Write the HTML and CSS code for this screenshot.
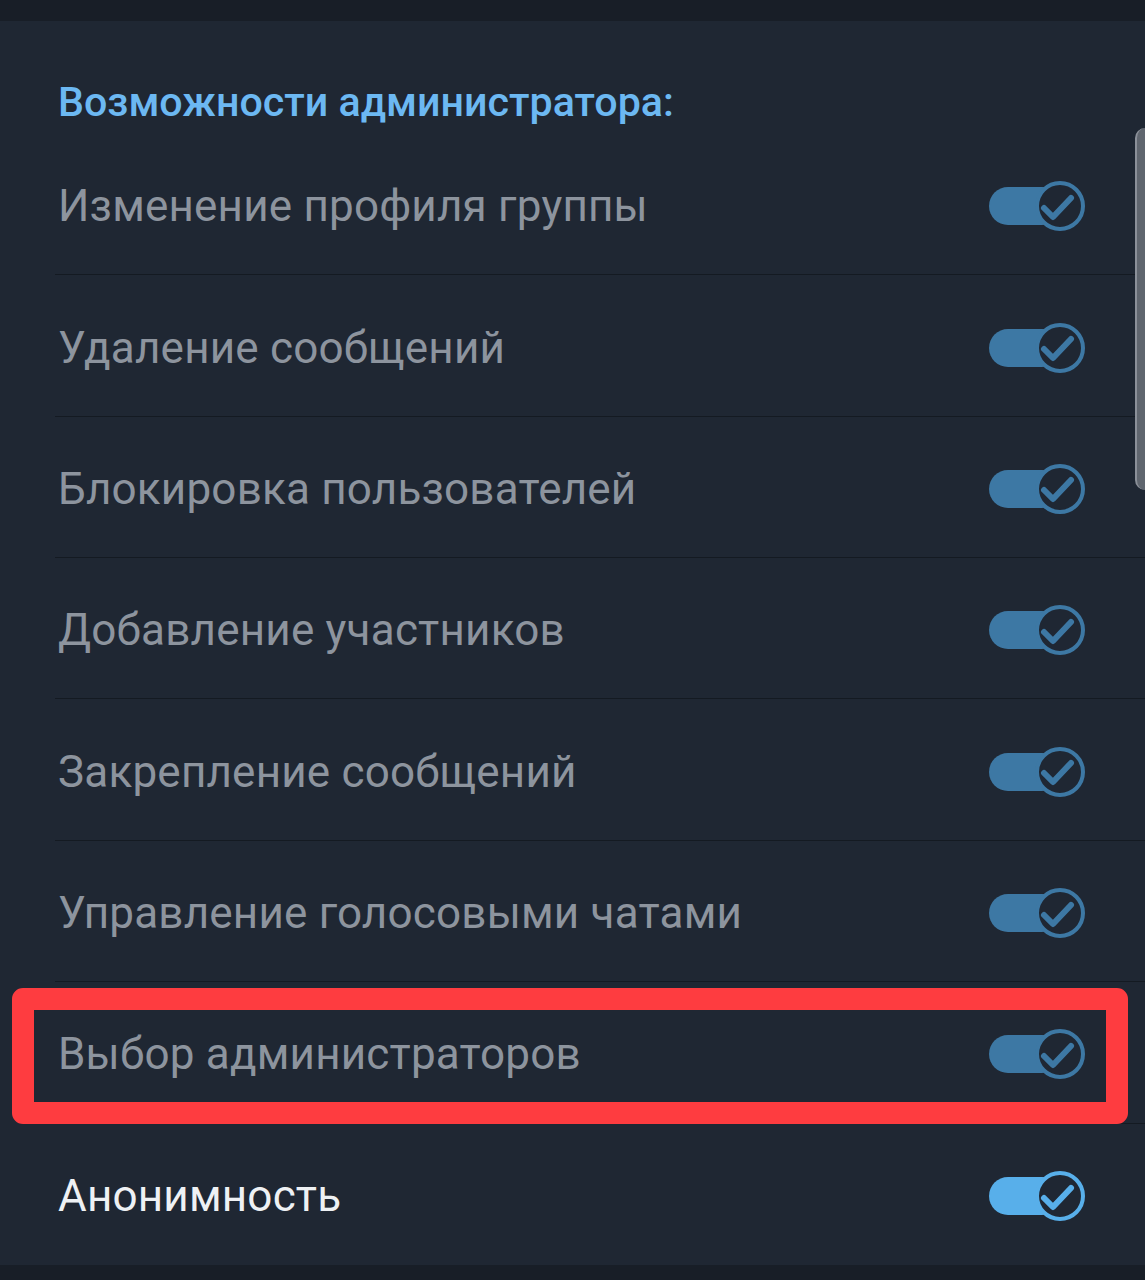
FILE: index.html
```html
<!DOCTYPE html>
<html lang="ru">
<head>
  <meta charset="UTF-8" />
  <meta name="viewport" content="width=device-width, initial-scale=1" />
  <title>Права администратора</title>
  <link rel="stylesheet" href="styles.css">
</head>
<body>
  <div class="topbar"></div>
  <main class="panel">
    <h2 class="section-title">Возможности администратора:</h2>
    <ul class="rights">
      <li class="right-row">
        <span class="right-label">Изменение профиля группы</span>
        <span class="toggle dim"><span class="knob"><svg viewBox="0 0 50 50"><path d="M9 27 L18 36 L36 17" /></svg></span></span>
      </li>
      <li class="right-row">
        <span class="right-label">Удаление сообщений</span>
        <span class="toggle dim"><span class="knob"><svg viewBox="0 0 50 50"><path d="M9 27 L18 36 L36 17" /></svg></span></span>
      </li>
      <li class="right-row">
        <span class="right-label">Блокировка пользователей</span>
        <span class="toggle dim"><span class="knob"><svg viewBox="0 0 50 50"><path d="M9 27 L18 36 L36 17" /></svg></span></span>
      </li>
      <li class="right-row">
        <span class="right-label">Добавление участников</span>
        <span class="toggle dim"><span class="knob"><svg viewBox="0 0 50 50"><path d="M9 27 L18 36 L36 17" /></svg></span></span>
      </li>
      <li class="right-row">
        <span class="right-label">Закрепление сообщений</span>
        <span class="toggle dim"><span class="knob"><svg viewBox="0 0 50 50"><path d="M9 27 L18 36 L36 17" /></svg></span></span>
      </li>
      <li class="right-row">
        <span class="right-label">Управление голосовыми чатами</span>
        <span class="toggle dim"><span class="knob"><svg viewBox="0 0 50 50"><path d="M9 27 L18 36 L36 17" /></svg></span></span>
      </li>
      <li class="right-row marked">
        <span class="right-label">Выбор администраторов</span>
        <span class="toggle dim"><span class="knob"><svg viewBox="0 0 50 50"><path d="M9 27 L18 36 L36 17" /></svg></span></span>
        <!-- red highlight frame drawn over the row -->
        <span class="highlight"></span>
      </li>
      <li class="right-row last">
        <span class="right-label active">Анонимность</span>
        <span class="toggle on"><span class="knob"><svg viewBox="0 0 50 50"><path d="M9 27 L18 36 L36 17" /></svg></span></span>
      </li>
    </ul>
    <div class="scrollbar"></div>
  </main>
  <div class="bottombar"></div>
</body>
</html>
```

FILE: styles.css
```css
/* Reset & Global Styles */
html, body {
  margin: 0;
  padding: 0;
}
body {
  background-color: #1f2733;
  font-family: Roboto, 'Noto Sans', sans-serif;
  width: 1145px;
  height: 1280px;
  overflow: hidden;
  display: flex;
  flex-direction: column;
}
.topbar, .bottombar {
  background-color: #181e27;
}
.topbar {
  height: 21px;
}
.bottombar {
  height: 15px;
}
.panel {
  position: relative;
  flex: 1;
}
/* Section title */
.section-title {
  margin: 0;
  height: 113px;
  box-sizing: border-box;
  padding: 59px 0 0 58px;
  font-size: 41.2px;
  line-height: 44px;
  font-weight: 500;
  color: #6cb8f2;
}
/* Rights list */
.rights {
  list-style: none;
  margin: 0 0 0 55px;
  padding: 0;
}
.right-row {
  position: relative;
  height: 141.4px;
  box-sizing: border-box;
  padding: 4px 60px 0 3px;
  display: flex;
  align-items: center;
  justify-content: space-between;
  border-bottom: 1.5px solid #141a22;
}
.right-row.last {
  border-bottom: none;
}
.right-label {
  font-size: 44px;
  color: #8d949e;
  letter-spacing: 0.2px;
}
.right-label.active {
  color: #eef1f4;
}
/* Toggle */
.toggle {
  position: relative;
  width: 96px;
  height: 50px;
  display: flex;
  align-items: center;
}
.toggle::before {
  content: "";
  width: 72px;
  height: 38px;
  border-radius: 19px;
  background: currentColor;
}
.toggle.dim {
  color: #3d78a4;
}
.toggle.on {
  color: #58afea;
}
.knob {
  position: absolute;
  right: 0;
  top: 0;
  width: 50px;
  height: 50px;
  box-sizing: border-box;
  border-radius: 50%;
  border: 4.5px solid currentColor;
  background: #1f2733;
}
.knob svg {
  position: absolute;
  left: -4.5px;
  top: -4.5px;
  width: 50px;
  height: 50px;
}
.knob path {
  fill: none;
  stroke: currentColor;
  stroke-width: 6;
  stroke-linecap: round;
  stroke-linejoin: round;
}
/* Red highlight frame */
.highlight {
  position: absolute;
  top: 6px;
  left: -43px;
  right: 17px;
  height: 136px;
  box-sizing: border-box;
  border: 22px solid #fe3c40;
  border-radius: 11px;
}
/* Scroll indicator */
.scrollbar {
  position: absolute;
  top: 107px;
  right: -10px;
  width: 20px;
  height: 362px;
  box-sizing: border-box;
  border-radius: 10px;
  background: #60666f;
  border-left: 2px solid #8b9099;
}
```
